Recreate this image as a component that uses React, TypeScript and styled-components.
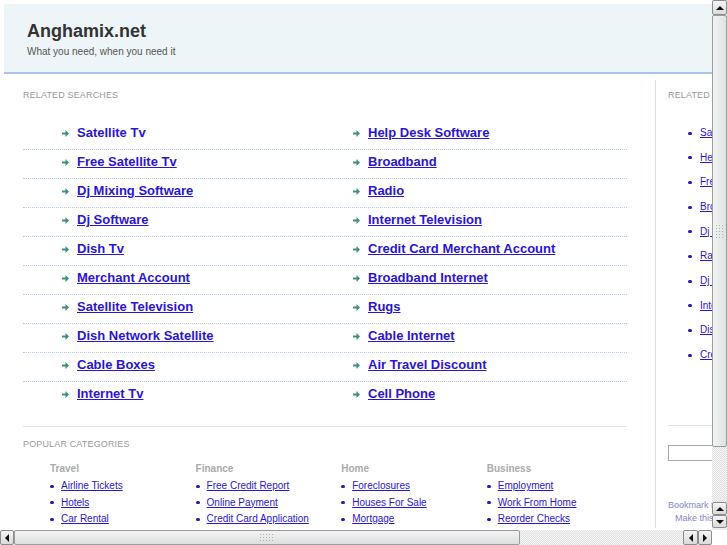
import styled, { createGlobalStyle } from 'styled-components';

const GlobalStyle = createGlobalStyle`
    html, body {
        margin: 0;
        padding: 0;
        background: #ffffff;
        font-family: "Liberation Sans", Arial, sans-serif;
    }
`;

const linkColor = '#2a14d6';

const Frame = styled.div`
    width: 727px;
    height: 545px;
    display: flex;
    flex-direction: column;
    overflow: hidden;
    background: #fff;
`;

const TopRow = styled.div`
    display: flex;
    height: 530px;
`;

const Viewport = styled.div`
    width: 712px;
    height: 530px;
    overflow: hidden;
`;

const Page = styled.div`
    width: 980px;
    padding: 4px 0 0 4px;
`;

const Header = styled.header`
    background: #eef5f8;
    border-bottom: 2px solid #aac3e8;
    padding-left: 23px;
    display: flex;
    flex-direction: column;
    justify-content: center;
    box-sizing: border-box;
    height: 70px;
`;

const SiteTitle = styled.h1`
    margin: 0;
    font-size: 18px;
    line-height: 20px;
    font-weight: bold;
    color: #333;
    margin-top: 2px;
`;

const Tagline = styled.div`
    font-size: 10px;
    line-height: 12px;
    color: #555;
    margin-top: 5px;
`;

const Body = styled.div`
    display: flex;
    margin-top: 6px;
`;

const Main = styled.div`
    width: 604px;
    padding-left: 19px;
    padding-top: 10px;
    margin-right: 28px;
`;

const SectionTitle = styled.div`
    font-size: 9px;
    line-height: 11px;
    letter-spacing: 0.15px;
    color: #999;
    text-transform: uppercase;
    white-space: nowrap;
`;

const ResultList = styled.div`
    margin-top: 20px;
`;

const ResultRow = styled.div<{ last?: boolean }>`
    display: grid;
    grid-template-columns: 291px 1fr;
    padding: 4px 0 8px 39px;
    border-bottom: 1px dotted ${p => (p.last ? 'transparent' : '#b3cbe8')};
`;

const ResultItem = styled.div`
    display: flex;
    align-items: center;
    gap: 8px;
    line-height: 16px;
`;

const ResultLink = styled.a<{ plain?: boolean }>`
    font-size: 13px;
    font-weight: bold;
    color: ${linkColor};
    text-decoration: ${p => (p.plain ? 'none' : 'underline')};
    cursor: pointer;
`;

const Popular = styled.div`
    margin-top: 15px;
    border-top: 1px solid #dde6f1;
    padding-top: 12px;
`;

const CategoryGrid = styled.div`
    display: grid;
    grid-template-columns: repeat(4, 145.6px);
    padding-left: 27px;
    margin-top: 12px;
`;

const CategoryName = styled.div`
    font-size: 10px;
    font-weight: bold;
    line-height: 14px;
    color: #aaa;
    margin-bottom: 2px;
`;

const CategoryItem = styled.div`
    display: flex;
    align-items: center;
    gap: 7px;
    line-height: 16.5px;
`;

const Bullet = styled.span`
    width: 4px;
    height: 3px;
    border-radius: 2px;
    background: #2a14b8;
    flex: none;
`;

const SmallLink = styled.a`
    font-size: 10px;
    color: ${linkColor};
    text-decoration: underline;
    white-space: nowrap;
    cursor: pointer;
`;

const Sidebar = styled.aside`
    width: 260px;
    border-left: 1px solid #d3def0;
    padding: 10px 0 0 12px;
`;

const SideList = styled.div`
    margin-top: 20px;
    padding-left: 20px;
`;

const SideItem = styled.div`
    display: flex;
    align-items: center;
    gap: 8px;
    line-height: 24.65px;
`;

const SideRule = styled.div`
    margin-top: 57px;
    border-top: 1px solid #dde6f1;
`;

const SearchBox = styled.input`
    display: block;
    margin-top: 19px;
    width: 180px;
    height: 16px;
    box-sizing: border-box;
    border: 1px solid #aaa;
    padding: 0 3px;
    font-size: 10px;
    outline: none;
`;

const Bookmarks = styled.div`
    margin-top: 38px;
`;

const BookmarkLine = styled.div<{ indent?: number }>`
    font-size: 9px;
    line-height: 13px;
    color: #8585cf;
    padding-left: ${p => p.indent ?? 0}px;
    white-space: nowrap;
`;

/* scrollbars */

const VBar = styled.div`
    width: 15px;
    height: 530px;
    display: flex;
    flex-direction: column;
    background: #eee;
`;

const HRow = styled.div`
    display: flex;
    height: 15px;
`;

const HBar = styled.div`
    width: 712px;
    height: 15px;
    display: flex;
    background: #eee;
`;

const Corner = styled.div`
    width: 15px;
    background: #fff;
`;

const ArrowButton = styled.div<{ w: number; h: number }>`
    width: ${p => p.w}px;
    height: ${p => p.h}px;
    box-sizing: border-box;
    border: 1px solid #8c8c8c;
    border-radius: 2px;
    background: linear-gradient(#f6f6f6, #dadada);
    display: flex;
    align-items: center;
    justify-content: center;
    flex: none;
`;

const Thumb = styled.div<{ vertical?: boolean; size: number }>`
    ${p => (p.vertical ? `height: ${p.size}px; width: 15px;` : `width: ${p.size}px; height: 15px;`)}
    box-sizing: border-box;
    border: 1px solid #9c9c9c;
    border-radius: 2px;
    background: ${p =>
        p.vertical
            ? 'linear-gradient(to right, #f2f4f4, #dfe2e2)'
            : 'linear-gradient(#f2f4f4, #dcdfdf)'};
    display: flex;
    align-items: center;
    justify-content: center;
    flex: none;
`;

const Grip = styled.div<{ w: number; h: number }>`
    width: ${p => p.w}px;
    height: ${p => p.h}px;
    background: radial-gradient(circle, #b0b0b0 0.7px, transparent 0.8px) 0 0 / 3px 3px;
`;

const Track = styled.div`
    flex: 1;
    background: repeating-conic-gradient(#e0e0e0 0% 25%, #f5f5f5 0% 50%) 0 0 / 2px 2px;
`;

const BarEnd = styled.div`
    height: 2px;
    flex: none;
`;

type Dir = 'up' | 'down' | 'left' | 'right';

function Tri({ dir }: { dir: Dir }) {
    const paths: Record<Dir, string> = {
        up: 'M0 5 L4 1 L8 5 Z',
        down: 'M0 1 L8 1 L4 5 Z',
        left: 'M5 0 L5 8 L1 4 Z',
        right: 'M1 0 L1 8 L5 4 Z',
    };
    const vertical = dir === 'up' || dir === 'down';
    return (
        <svg width={vertical ? 8 : 6} height={vertical ? 6 : 8} viewBox={vertical ? '0 0 8 6' : '0 0 6 8'}>
            <path d={paths[dir]} fill="#111" />
        </svg>
    );
}

function GreenArrow() {
    return (
        <svg width="7" height="7" viewBox="0 0 7 7" style={{ flex: 'none' }}>
            <path d="M0 2.5 H3.5 V0 L7 3.5 L3.5 7 V4.5 H0 Z" fill="#3f8f80" />
        </svg>
    );
}

const related: [string, string][] = [
    ['Satellite Tv', 'Help Desk Software'],
    ['Free Satellite Tv', 'Broadband'],
    ['Dj Mixing Software', 'Radio'],
    ['Dj Software', 'Internet Television'],
    ['Dish Tv', 'Credit Card Merchant Account'],
    ['Merchant Account', 'Broadband Internet'],
    ['Satellite Television', 'Rugs'],
    ['Dish Network Satellite', 'Cable Internet'],
    ['Cable Boxes', 'Air Travel Discount'],
    ['Internet Tv', 'Cell Phone'],
];

const categories = [
    { name: 'Travel', items: ['Airline Tickets', 'Hotels', 'Car Rental'] },
    { name: 'Finance', items: ['Free Credit Report', 'Online Payment', 'Credit Card Application'] },
    { name: 'Home', items: ['Foreclosures', 'Houses For Sale', 'Mortgage'] },
    { name: 'Business', items: ['Employment', 'Work From Home', 'Reorder Checks'] },
];

const sideLinks = [
    'Satellite Tv',
    'Help Desk Software',
    'Free Satellite Tv',
    'Broadband',
    'Dj Mixing Software',
    'Radio',
    'Dj Software',
    'Internet Television',
    'Dish Tv',
    'Credit Card Merchant Account',
];

function App() {
    return (
        <Frame>
            <GlobalStyle />
            <TopRow>
                <Viewport>
                    <Page>
                        <Header>
                            <SiteTitle>Anghamix.net</SiteTitle>
                            <Tagline>What you need, when you need it</Tagline>
                        </Header>
                        <Body>
                            <Main>
                                <SectionTitle>Related Searches</SectionTitle>
                                <ResultList>
                                    {related.map((pair, i) => (
                                        <ResultRow key={i} last={i === related.length - 1}>
                                            {pair.map((label, j) => (
                                                <ResultItem key={label}>
                                                    <GreenArrow />
                                                    <ResultLink plain={i === 0 && j === 0}>{label}</ResultLink>
                                                </ResultItem>
                                            ))}
                                        </ResultRow>
                                    ))}
                                </ResultList>
                                <Popular>
                                    <SectionTitle>Popular Categories</SectionTitle>
                                    <CategoryGrid>
                                        {categories.map(cat => (
                                            <div key={cat.name}>
                                                <CategoryName>{cat.name}</CategoryName>
                                                {cat.items.map(item => (
                                                    <CategoryItem key={item}>
                                                        <Bullet />
                                                        <SmallLink>{item}</SmallLink>
                                                    </CategoryItem>
                                                ))}
                                            </div>
                                        ))}
                                    </CategoryGrid>
                                </Popular>
                            </Main>
                            <Sidebar>
                                <SectionTitle>Related Searches</SectionTitle>
                                <SideList>
                                    {sideLinks.map(label => (
                                        <SideItem key={label}>
                                            <Bullet />
                                            <SmallLink>{label}</SmallLink>
                                        </SideItem>
                                    ))}
                                </SideList>
                                <SideRule />
                                <SearchBox type="text" />
                                <Bookmarks>
                                    <BookmarkLine>Bookmark this page</BookmarkLine>
                                    <BookmarkLine indent={7}>Make this your homepage</BookmarkLine>
                                </Bookmarks>
                            </Sidebar>
                        </Body>
                    </Page>
                </Viewport>
                <VBar>
                    <ArrowButton w={15} h={15}>
                        <Tri dir="up" />
                    </ArrowButton>
                    <Thumb vertical size={432}>
                        <Grip w={9} h={15} />
                    </Thumb>
                    <Track />
                    <ArrowButton w={15} h={13}>
                        <Tri dir="up" />
                    </ArrowButton>
                    <ArrowButton w={15} h={13}>
                        <Tri dir="down" />
                    </ArrowButton>
                    <BarEnd />
                </VBar>
            </TopRow>
            <HRow>
                <HBar>
                    <ArrowButton w={14} h={15}>
                        <Tri dir="left" />
                    </ArrowButton>
                    <Thumb size={506}>
                        <Grip w={16} h={9} />
                    </Thumb>
                    <Track />
                    <ArrowButton w={15} h={15}>
                        <Tri dir="left" />
                    </ArrowButton>
                    <ArrowButton w={14} h={15}>
                        <Tri dir="right" />
                    </ArrowButton>
                </HBar>
                <Corner />
            </HRow>
        </Frame>
    );
}

export default App;
